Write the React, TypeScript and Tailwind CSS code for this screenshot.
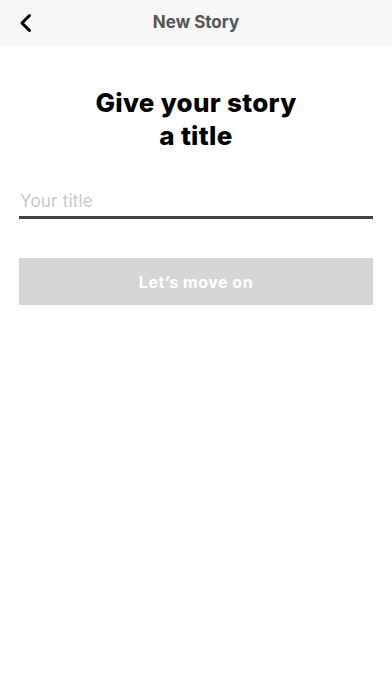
import React, { useState } from 'react';

const App = () => {
  const [title, setTitle] = useState('');

  return (
    <div className="min-h-[696px] w-full bg-white" style={{ fontFamily: 'Inter, "Noto Sans", sans-serif' }}>
      {/* Header */}
      <div className="relative flex h-[46px] items-center justify-center bg-[#f7f7f7]">
        <button className="absolute left-[14px] top-[11px] flex h-6 w-6 items-center justify-center text-black">
          <svg width="16" height="20" viewBox="0 0 16 20" fill="none">
            <path d="M11.5 2.5 L4 10 L11.5 17.5" stroke="currentColor" strokeWidth="3" strokeLinecap="round" strokeLinejoin="round" />
          </svg>
        </button>
        <h1 className="text-[17px] font-bold text-[#555555]">New Story</h1>
      </div>

      {/* Heading */}
      <div className="px-[19px] pt-[40px]">
        <h2 className="text-center text-[26px] font-extrabold leading-[33px] tracking-[0.3px] text-black">
          Give your story
          <br />
          a title
        </h2>

        {/* Input */}
        <div className="mt-[30px] border-b-[3px] border-[#444444]">
          <input
            value={title}
            onChange={(e) => setTitle(e.target.value)}
            placeholder="Your title"
            autoFocus
            className="h-[34px] w-full bg-transparent pt-[4px] pl-[1px] text-[17px] tracking-[0.2px] text-black caret-[#555555] outline-none placeholder:text-[#c8c8c8]"
          />
        </div>

        {/* Button */}
        <button
          disabled={title.length === 0}
          className="mt-[39px] flex h-[47px] w-full items-center justify-center bg-[#d6d6d6] text-[16px] font-bold tracking-[0.5px] text-white"
        >
          Let’s move on
        </button>
      </div>
    </div>
  );
};

export default App;
